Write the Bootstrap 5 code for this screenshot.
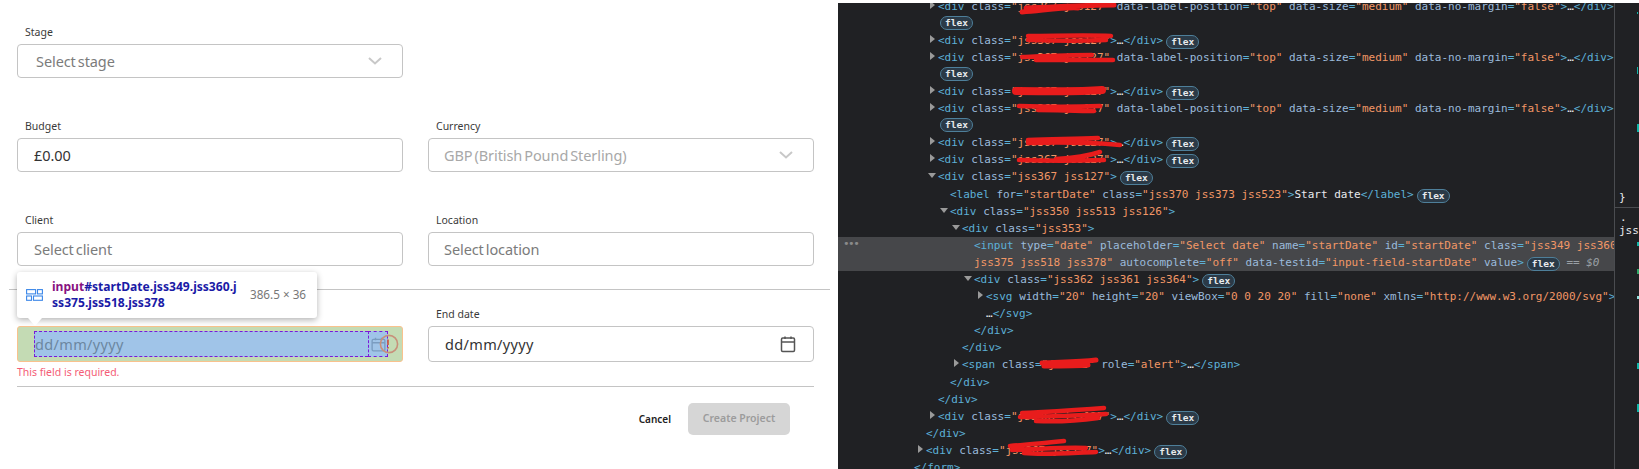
<!doctype html>
<html lang="en">
<head>
<meta charset="utf-8">
<title>Create Project</title>
<link href="https://cdn.jsdelivr.net/npm/bootstrap@5.3.0/dist/css/bootstrap.min.css" rel="stylesheet">
<style>
html,body{height:469px;overflow:hidden;background:#fff}
.shot{height:469px;font-family:"Noto Sans",sans-serif}
.formpane{width:838px;padding:24px 24px 0 17px;flex:none;position:relative}
.fieldrow{display:flex;gap:25px;margin-bottom:40px}
.fieldrow.last{margin-bottom:0}
.fieldcol{width:386px}
.fieldlabel{font-size:10.5px;line-height:16px;height:16px;margin:0 0 4px 8px;color:#3a3a3a;display:block}
.fieldlabel.covered{visibility:hidden}
.inputbox.form-control{height:34px;display:flex;align-items:center;justify-content:space-between;padding:0 16px;border:1px solid #c4c4c4;border-radius:4px;font-size:14.5px;color:#7b7b7b;line-height:1;word-spacing:-1.7px;letter-spacing:-.08px}
.inputbox.form-control.tall{height:36px;letter-spacing:.35px}
.inputbox.form-control.valued{color:#333}
.inputbox.form-control.dimmed{color:#a8a8a8;padding-left:15px}
.inputbox.form-control.placeholdered{color:#7b7b7b;padding-left:15px}
.inputbox.form-control.pushed{padding-left:18px}
.chev{width:14px;height:8px;color:#c8c8c8;margin-right:4px;flex:none}
.calicon{width:20px;height:20px;color:#555;margin-right:-1px;flex:none}
.rule1{margin:23px -16px 16px -8px;border-top:1px solid #c4c4c4;opacity:1}
.rule2{margin:0;border-top:1px solid #c4c4c4;opacity:1;width:797px}
.hilite{height:36px;background:#c4dbb4;border:1px solid #f9c28d;border-radius:3px;padding:4px 14px 4px 16px;display:flex;position:relative;font-size:14.5px;letter-spacing:.35px;color:#6c87a0}
.hilite-main{flex:1;background:#a0c4e8;border:1px dashed #7a18d8;border-right:0;display:flex;align-items:center;line-height:1}
.hilite-ico{width:20px;background:#a0c4e8;border:1px dashed #7a18d8;display:flex;align-items:center;justify-content:center}
.warnring{position:absolute;right:3px;top:7px;width:20px;height:20px;color:#c8907a}
.errtext{font-size:10.5px;line-height:16px;margin:2px 0 6px 0;color:#f45c76}
.actions{display:flex;justify-content:flex-end;align-items:center;margin-top:16px;width:797px;padding-right:24px;gap:17px}
.cancelbtn.btn{font-size:10px;font-weight:600;color:#222;padding:0;border:0;line-height:32px}
.createbtn.btn{width:102px;height:32px;padding:0;background:#d6d6d6;border:0;border-radius:5px;color:#9c9c9c;font-size:10.5px;font-weight:600;opacity:1}
.inspecttip{position:absolute;left:17px;top:272px;width:300px;height:46px;background:#fff;border-radius:3px;box-shadow:0 2px 6px rgba(0,0,0,.3);display:flex;align-items:center;z-index:3}
.inspecttip::after{content:"";position:absolute;left:11px;top:100%;border-left:7px solid transparent;border-right:7px solid transparent;border-top:8px solid #fff}
.tipicon{width:17px;height:12px;margin:0 9px 0 9px;color:#3b87e8;flex:none}
.tipname{font-size:12.1px;font-weight:700;line-height:16.5px;color:#1a1aa6;width:190px;white-space:nowrap}
.tipname span{color:#881280}
.tipsize{font-size:11.7px;color:#777;margin-left:8px;white-space:nowrap}
.devpane{flex:1;background:#202124;margin-top:3px;overflow:hidden;display:flex;font:11px/17.1px "DejaVu Sans Mono",monospace;color:#e8eaed;height:466px}
.treepane{width:776px;flex:none;overflow:hidden;border-right:1px solid #4a4c50;box-sizing:content-box}
.treeinner{margin-top:-5.5px}
.dline{height:17.1px;white-space:nowrap;position:relative}
.d0{padding-left:76px}.d1{padding-left:88px}.d2{padding-left:100px}.d3{padding-left:112px}.d4{padding-left:124px}.d5{padding-left:136px}.d6{padding-left:148px}
.fb{padding-left:102px}
.sel{background:#46474a}
.tg{color:#5db0d7}.an{color:#9bbbdc}.av{color:#f29766}.dim{color:#9aa0a6;font-style:italic}
.eq{color:#9aa0a6}
.tri{display:inline-block;width:0;height:0;margin-left:-8px;margin-right:3px;vertical-align:1px}
.tri.r{border-left:5px solid #9a9a9a;border-top:4px solid transparent;border-bottom:4px solid transparent;margin-right:3px}
.tri.d{border-top:5px solid #9a9a9a;border-left:4px solid transparent;border-right:4px solid transparent;margin-left:-10px;margin-right:2px;vertical-align:2px}
.flexpill{display:inline-block;width:33px;height:14px;line-height:12px;border:1px solid #4e7f9a;border-radius:8px;background:#2b3a47;color:#e8eaed;font-size:9.5px;text-align:center;margin-left:3px;vertical-align:-1px;font-weight:600}
.fb .flexpill{margin-left:0;vertical-align:1px}
.dots{position:absolute;left:5px;top:0;color:#8a8a8a;letter-spacing:-1.5px;line-height:14px}
.inkwrap{position:relative;display:inline-block}
.ink{position:absolute;left:-12px;top:-4px;width:120px;height:26px;overflow:visible;color:#e81c1c}
.sidepane{flex:1;overflow:hidden;padding-left:4px;font-size:11px;color:#e8eaed;line-height:17px;position:relative}
.sidepane .brace{margin-top:186px;height:17px}
.sideline{border-top:1px solid #4a4c50;margin:1px 0 0 -4px;height:0}
.sidedot{height:11px;line-height:10px;margin-top:5px;padding-left:1px}
.sidejss{height:13px;line-height:13px}
.markcol{position:absolute;right:0;top:0;width:2px}
.tealmark{display:block;background:#12b5a8}
.tm1{margin-top:9px;height:2px;width:1px}
.tm2{margin-top:53px;height:7px;width:1px}
.tm3{margin-top:50px;height:8px}
.tm4{margin-top:110px;height:4px}
.tm5{margin-top:23px;height:5px;background:#2fa866}
.tm6{margin-top:22px;height:3px;background:#8fe0dc}
.tm7{margin-top:64px;height:6px}
.tm8{margin-top:35px;height:8px}
</style>
</head>
<body>
<div class="shot d-flex">
  <div class="formpane">
    <div class="fieldrow">
      <div class="fieldcol">
        <label class="fieldlabel">Stage</label>
        <div class="form-control inputbox pushed"><span>Select stage</span><svg class="chev" viewBox="0 0 14 8" fill="none" stroke="currentColor" stroke-width="2"><path d="M1 1l6 5.5L13 1"/></svg></div>
      </div>
    </div>
    <div class="fieldrow">
      <div class="fieldcol">
        <label class="fieldlabel">Budget</label>
        <div class="form-control inputbox valued"><span>£0.00</span></div>
      </div>
      <div class="fieldcol">
        <label class="fieldlabel">Currency</label>
        <div class="form-control inputbox dimmed"><span>GBP (British Pound Sterling)</span><svg class="chev" viewBox="0 0 14 8" fill="none" stroke="currentColor" stroke-width="2"><path d="M1 1l6 5.5L13 1"/></svg></div>
      </div>
    </div>
    <div class="fieldrow mb-0">
      <div class="fieldcol">
        <label class="fieldlabel">Client</label>
        <div class="form-control inputbox"><span>Select client</span></div>
      </div>
      <div class="fieldcol">
        <label class="fieldlabel">Location</label>
        <div class="form-control inputbox placeholdered"><span>Select location</span></div>
      </div>
    </div>
    <hr class="rule1">
    <div class="fieldrow last">
      <div class="fieldcol">
        <label class="fieldlabel covered">Start date</label>
        <div class="hilite">
          <div class="hilite-main"><span>dd/mm/yyyy</span></div>
          <div class="hilite-ico"><svg width="17" height="17" viewBox="0 0 20 20" fill="none" stroke="#7a9cc0" stroke-width="1.6"><rect x="2.5" y="4" width="15" height="13.5" rx="1.5"/><path d="M2.5 8h15M6.5 2v3M13.5 2v3"/></svg></div>
          <svg class="warnring" viewBox="0 0 20 20" fill="none" stroke="currentColor" stroke-width="1.6"><circle cx="10" cy="10" r="8.6"/><path d="M9 5.5v5.5M9 13v1.6" stroke="#c8604a" stroke-width="1.8"/></svg>
        </div>
        <div class="errtext">This field is required.</div>
      </div>
      <div class="fieldcol">
        <label class="fieldlabel">End date</label>
        <div class="form-control inputbox tall valued"><span>dd/mm/yyyy</span><svg class="calicon" viewBox="0 0 20 20" fill="none" stroke="currentColor" stroke-width="1.5"><rect x="3.5" y="4" width="13" height="13.5" rx="1.2"/><path d="M3.5 8h13M7 2.5v2.5M13 2.5v2.5"/></svg></div>
      </div>
    </div>
    <hr class="rule2">
    <div class="actions">
      <button type="button" class="btn cancelbtn">Cancel</button>
      <button type="button" class="btn createbtn" disabled>Create Project</button>
    </div>
    <div class="inspecttip">
      <svg class="tipicon" viewBox="0 0 17 12" fill="none" stroke="currentColor" stroke-width="1.1"><rect x=".6" y=".6" width="9" height="4.3"/><rect x="11.5" y=".6" width="4.9" height="4.3"/><rect x=".6" y="7" width="4.9" height="4.3"/><rect x="7.5" y="7" width="8.9" height="4.3"/></svg>
      <div class="tipname"><span>input</span>#startDate.jss349.jss360.j<br>ss375.jss518.jss378</div>
      <div class="tipsize">386.5 × 36</div>
    </div>
  </div>
  <div class="devpane">
    <div class="treepane"><div class="treeinner">
      <div class="dline d2"><i class="tri r"></i><span class="tg">&lt;div</span> <span class="an">class</span><span class="tg">=</span><span class="av">"<span class="inkwrap">jss367 jss127<svg class="ink" viewBox="0 0 120 26" fill="none" stroke="currentColor" stroke-width="5" stroke-linecap="round"><path d="M16 18C40 16 60 13 72 14M20 14C50 13 80 11 108 11"/></svg></span>"</span> <span class="an">data-label-position</span><span class="tg">=</span><span class="av">"top"</span> <span class="an">data-size</span><span class="tg">=</span><span class="av">"medium"</span> <span class="an">data-no-margin</span><span class="tg">=</span><span class="av">"false"</span><span class="tg">&gt;</span>…<span class="tg">&lt;/div&gt;</span></div>
      <div class="dline fb"><span class="flexpill">flex</span></div>
      <div class="dline d2"><i class="tri r"></i><span class="tg">&lt;div</span> <span class="an">class</span><span class="tg">=</span><span class="av">"<span class="inkwrap">jss367 jss127<svg class="ink" viewBox="0 0 120 26" fill="none" stroke="currentColor" stroke-width="4.5" stroke-linecap="round"><path d="M22 8C50 8 80 7 105 8M22 12C50 13 80 13 100 12"/></svg></span>"</span><span class="tg">&gt;</span>…<span class="tg">&lt;/div&gt;</span><span class="flexpill">flex</span></div>
      <div class="dline d2"><i class="tri r"></i><span class="tg">&lt;div</span> <span class="an">class</span><span class="tg">=</span><span class="av">"<span class="inkwrap">jss367 jss127<svg class="ink" viewBox="0 0 120 26" fill="none" stroke="currentColor" stroke-width="4.5" stroke-linecap="round"><path d="M16 12C40 11 60 10 86 10M30 15C60 15 90 15 107 15"/></svg></span>"</span> <span class="an">data-label-position</span><span class="tg">=</span><span class="av">"top"</span> <span class="an">data-size</span><span class="tg">=</span><span class="av">"medium"</span> <span class="an">data-no-margin</span><span class="tg">=</span><span class="av">"false"</span><span class="tg">&gt;</span>…<span class="tg">&lt;/div&gt;</span></div>
      <div class="dline fb"><span class="flexpill">flex</span></div>
      <div class="dline d2"><i class="tri r"></i><span class="tg">&lt;div</span> <span class="an">class</span><span class="tg">=</span><span class="av">"<span class="inkwrap">jss367 jss127<svg class="ink" viewBox="0 0 120 26" fill="none" stroke="currentColor" stroke-width="8" stroke-linecap="round"><path d="M10 12C40 12 70 13 96 11"/></svg></span>"</span><span class="tg">&gt;</span>…<span class="tg">&lt;/div&gt;</span><span class="flexpill">flex</span></div>
      <div class="dline d2"><i class="tri r"></i><span class="tg">&lt;div</span> <span class="an">class</span><span class="tg">=</span><span class="av">"<span class="inkwrap">jss367 jss127<svg class="ink" viewBox="0 0 120 26" fill="none" stroke="currentColor" stroke-width="4.5" stroke-linecap="round"><path d="M13 10C40 11 70 11 94 10M32 14C50 14 70 15 88 15"/></svg></span>"</span> <span class="an">data-label-position</span><span class="tg">=</span><span class="av">"top"</span> <span class="an">data-size</span><span class="tg">=</span><span class="av">"medium"</span> <span class="an">data-no-margin</span><span class="tg">=</span><span class="av">"false"</span><span class="tg">&gt;</span>…<span class="tg">&lt;/div&gt;</span></div>
      <div class="dline fb"><span class="flexpill">flex</span></div>
      <div class="dline d2"><i class="tri r"></i><span class="tg">&lt;div</span> <span class="an">class</span><span class="tg">=</span><span class="av">"<span class="inkwrap">jss367 jss127<svg class="ink" viewBox="0 0 120 26" fill="none" stroke="currentColor" stroke-width="4.5" stroke-linecap="round"><path d="M22 10C50 9 70 9 92 8M22 13C60 12 90 13 114 15"/></svg></span>"</span><span class="tg">&gt;</span>…<span class="tg">&lt;/div&gt;</span><span class="flexpill">flex</span></div>
      <div class="dline d2"><i class="tri r"></i><span class="tg">&lt;div</span> <span class="an">class</span><span class="tg">=</span><span class="av">"<span class="inkwrap">jss367 jss127<svg class="ink" viewBox="0 0 120 26" fill="none" stroke="currentColor" stroke-width="4.5" stroke-linecap="round"><path d="M13 13C40 14 70 14 98 13M50 12C70 11 85 8 94 5"/></svg></span>"</span><span class="tg">&gt;</span>…<span class="tg">&lt;/div&gt;</span><span class="flexpill">flex</span></div>
      <div class="dline d2"><i class="tri d"></i><span class="tg">&lt;div</span> <span class="an">class</span><span class="tg">=</span><span class="av">"jss367 jss127"</span><span class="tg">&gt;</span><span class="flexpill">flex</span></div>
      <div class="dline d3"><span class="tg">&lt;label</span> <span class="an">for</span><span class="tg">=</span><span class="av">"startDate"</span> <span class="an">class</span><span class="tg">=</span><span class="av">"jss370 jss373 jss523"</span><span class="tg">&gt;</span>Start date<span class="tg">&lt;/label&gt;</span><span class="flexpill">flex</span></div>
      <div class="dline d3"><i class="tri d"></i><span class="tg">&lt;div</span> <span class="an">class</span><span class="tg">=</span><span class="av">"jss350 jss513 jss126"</span><span class="tg">&gt;</span></div>
      <div class="dline d4"><i class="tri d"></i><span class="tg">&lt;div</span> <span class="an">class</span><span class="tg">=</span><span class="av">"jss353"</span><span class="tg">&gt;</span></div>
      <div class="dline d5 sel"><span class="dots">•••</span><span class="tg">&lt;input</span> <span class="an">type</span><span class="tg">=</span><span class="av">"date"</span> <span class="an">placeholder</span><span class="tg">=</span><span class="av">"Select date"</span> <span class="an">name</span><span class="tg">=</span><span class="av">"startDate"</span> <span class="an">id</span><span class="tg">=</span><span class="av">"startDate"</span> <span class="an">class</span><span class="tg">=</span><span class="av">"jss349 jss360</span></div>
      <div class="dline d5 sel"><span class="av">jss375 jss518 jss378"</span> <span class="an">autocomplete</span><span class="tg">=</span><span class="av">"off"</span> <span class="an">data-testid</span><span class="tg">=</span><span class="av">"input-field-startDate"</span> <span class="an">value</span><span class="tg">&gt;</span><span class="flexpill">flex</span> <span class="eq">==</span> <span class="dim">$0</span></div>
      <div class="dline d5"><i class="tri d"></i><span class="tg">&lt;div</span> <span class="an">class</span><span class="tg">=</span><span class="av">"jss362 jss361 jss364"</span><span class="tg">&gt;</span><span class="flexpill">flex</span></div>
      <div class="dline d6"><i class="tri r"></i><span class="tg">&lt;svg</span> <span class="an">width</span><span class="tg">=</span><span class="av">"20"</span> <span class="an">height</span><span class="tg">=</span><span class="av">"20"</span> <span class="an">viewBox</span><span class="tg">=</span><span class="av">"0 0 20 20"</span> <span class="an">fill</span><span class="tg">=</span><span class="av">"none"</span> <span class="an">xmlns</span><span class="tg">=</span><span class="av">"http://www.w3.org/2000/svg"</span><span class="tg">&gt;</span></div>
      <div class="dline d6">…<span class="tg">&lt;/svg&gt;</span></div>
      <div class="dline d5"><span class="tg">&lt;/div&gt;</span></div>
      <div class="dline d4"><span class="tg">&lt;/div&gt;</span></div>
      <div class="dline d4"><i class="tri r"></i><span class="tg">&lt;span</span> <span class="an">class</span><span class="tg">=</span><span class="av">"<span class="inkwrap">jss362<svg class="ink" viewBox="0 0 120 26" fill="none" stroke="currentColor" stroke-width="5" stroke-linecap="round"><path d="M6 11C25 10 42 10 60 8M8 14C25 14 42 14 52 13"/></svg></span>"</span> <span class="an">role</span><span class="tg">=</span><span class="av">"alert"</span><span class="tg">&gt;</span>…<span class="tg">&lt;/span&gt;</span></div>
      <div class="dline d3"><span class="tg">&lt;/div&gt;</span></div>
      <div class="dline d2"><span class="tg">&lt;/div&gt;</span></div>
      <div class="dline d2"><i class="tri r"></i><span class="tg">&lt;div</span> <span class="an">class</span><span class="tg">=</span><span class="av">"<span class="inkwrap">jss367 jss127<svg class="ink" viewBox="0 0 120 26" fill="none" stroke="currentColor" stroke-width="4.5" stroke-linecap="round"><path d="M16 9C40 8 70 6 98 4M14 13C50 13 80 11 100 10M30 17C50 18 70 17 92 14"/></svg></span>"</span><span class="tg">&gt;</span>…<span class="tg">&lt;/div&gt;</span><span class="flexpill">flex</span></div>
      <div class="dline d1"><span class="tg">&lt;/div&gt;</span></div>
      <div class="dline d1"><i class="tri r"></i><span class="tg">&lt;div</span> <span class="an">class</span><span class="tg">=</span><span class="av">"<span class="inkwrap">jss367 jss127<svg class="ink" viewBox="0 0 120 26" fill="none" stroke="currentColor" stroke-width="4.5" stroke-linecap="round"><path d="M16 8C30 7 50 5 70 3M18 12C50 11 70 9 92 10M30 15C50 17 75 15 102 14"/></svg></span>"</span><span class="tg">&gt;</span>…<span class="tg">&lt;/div&gt;</span><span class="flexpill">flex</span></div>
      <div class="dline d0"><span class="tg">&lt;/form&gt;</span></div>
    </div></div>
    <div class="sidepane">
      <div class="brace">}</div>
      <div class="sideline"></div>
      <div class="sidedot">.</div>
      <div class="sidejss">jss</div>
      <div class="markcol">
        <i class="tealmark tm1"></i><i class="tealmark tm2"></i><i class="tealmark tm3"></i><i class="tealmark tm4"></i><i class="tealmark tm5"></i><i class="tealmark tm6"></i><i class="tealmark tm7"></i><i class="tealmark tm8"></i>
      </div>
    </div>
  </div>
</div>
</body>
</html>
